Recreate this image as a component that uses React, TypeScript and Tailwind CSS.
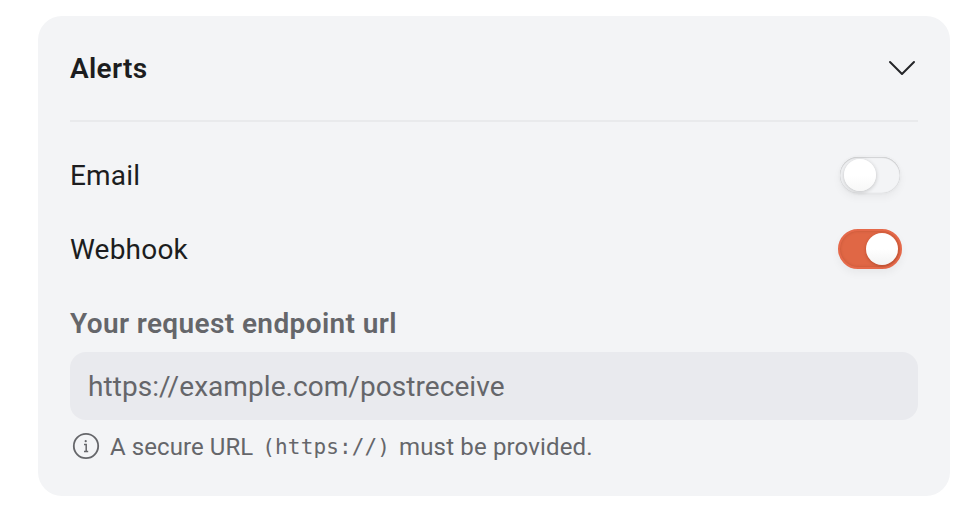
import React from 'react';

function Toggle({ on }: { on: boolean }) {
  return on ? (
    <button
      role="switch"
      aria-checked="true"
      aria-label="Webhook"
      className="flex h-10 w-16 items-center justify-end rounded-full border-2 border-[#e5694a] bg-[#e06745] pr-0.5 shadow-[inset_0_0_2px_1px_rgba(150,65,35,0.22),0_4px_8px_rgba(0,0,0,0.05)]"
    >
      <span className="size-8 rounded-full bg-linear-to-b from-white from-50% to-[#f3f3f3] shadow-[0_1px_3px_rgba(100,30,10,0.35)]" />
    </button>
  ) : (
    <button
      role="switch"
      aria-checked="false"
      aria-label="Email"
      className="mr-0.5 flex h-9 w-15 items-center rounded-full bg-[#f3f4f6] pl-1 shadow-[inset_0_1px_1px_rgba(0,0,0,0.12),inset_0_0_1px_rgba(0,0,0,0.22),0_0_0_2px_rgba(0,0,0,0.012),0_4px_8px_rgba(0,0,0,0.05)]"
    >
      <span className="size-8 rounded-full bg-linear-to-b from-white from-50% to-[#f7f7f7] shadow-[0_1px_4px_rgba(0,0,0,0.22)]" />
    </button>
  );
}

export default function App() {
  return (
    <main className="h-[516px] w-[974px] bg-white pt-4 pl-[38px] font-['Roboto','Liberation_Sans',sans-serif] text-[28px] leading-9 text-[#1c1d20]">
      <section className="h-[480px] w-[912px] rounded-3xl bg-[#f3f4f6] px-8">
        <header className="flex h-[106px] items-center justify-between border-b-2 border-[#e9eaec]">
          <h2 className="pt-0.5 font-semibold tracking-[0.3px]">Alerts</h2>
          <svg className="mr-0.5" width="28" height="16" viewBox="0 0 28 16" fill="none" stroke="#242529" strokeWidth="2" strokeLinecap="round" strokeLinejoin="round">
            <path d="M2 2L14 14L26 2" />
          </svg>
        </header>
        <div className="mt-[33px] flex h-10 items-center justify-between pr-4">
          <span className="pt-px tracking-[0.2px]">Email</span>
          <Toggle on={false} />
        </div>
        <div className="mt-[34px] flex h-10 items-center justify-between pr-4">
          <span className="pt-0.5 tracking-[0.2px]">Webhook</span>
          <Toggle on />
        </div>
        <div className="mt-[37px] text-[#65666a]">
          <div className="flex">
            <label htmlFor="endpoint" className="font-semibold tracking-[0.38px]">Your request endpoint url</label>
          </div>
          <input
            id="endpoint"
            placeholder="https://example.com/postreceive"
            className="mt-2.5 block h-[68px] w-full rounded-2xl bg-[#e9eaee] px-[18px] tracking-[0.06px] outline-none placeholder:text-[#65666a]"
          />
          <p className="mt-2.5 flex h-8 items-center pl-0.5 text-2xl">
            <svg className="mr-2.5" width="28" height="28" viewBox="0 0 28 28" fill="none" stroke="#65666a">
              <circle cx="14" cy="14" r="12.2" strokeWidth="1.8" />
              <circle cx="13.7" cy="9.2" r="1.1" fill="#65666a" stroke="none" />
              <path d="M12 12.5H14.2V19.5M12 19.5H16.2" strokeWidth="1.5" />
            </svg>
            <span className="pt-0.5 tracking-[0.08px]">A secure URL</span>
            <code className="mr-[9px] ml-[9px] pt-0.5 font-['DejaVu_Sans_Mono','Liberation_Mono',monospace] text-[21px] tracking-[0.12px]">(https://)</code>
            <span className="pt-0.5 tracking-[0.16px]">must be provided.</span>
          </p>
        </div>
      </section>
    </main>
  );
}
